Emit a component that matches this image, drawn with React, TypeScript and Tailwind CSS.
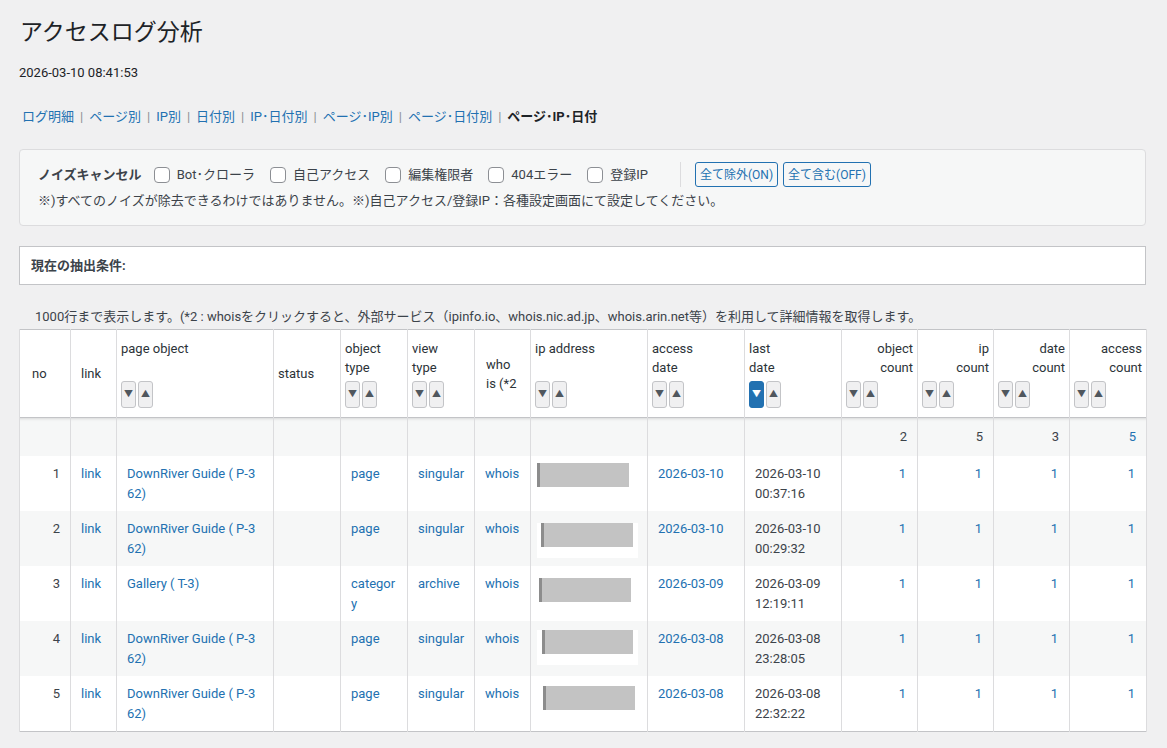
import React from "react";

interface Row {
  no: number;
  page: string;
  objType: string;
  viewType: string;
  access: string;
  lastDate: string;
  lastTime: string;
  ipBox: string;
  ipFrame: boolean;
}

const rows: Row[] = [
  { no: 1, page: "DownRiver Guide ( P-362)", objType: "page", viewType: "singular", access: "2026-03-10", lastDate: "2026-03-10", lastTime: "00:37:16", ipBox: "ml-[0px] mt-0 w-[92px]", ipFrame: false },
  { no: 2, page: "DownRiver Guide ( P-362)", objType: "page", viewType: "singular", access: "2026-03-10", lastDate: "2026-03-10", lastTime: "00:29:32", ipBox: "ml-[4px] mt-[6px] w-[92px]", ipFrame: true },
  { no: 3, page: "Gallery ( T-3)", objType: "category", viewType: "archive", access: "2026-03-09", lastDate: "2026-03-09", lastTime: "12:19:11", ipBox: "ml-[2px] mt-[5px] w-[92px]", ipFrame: false },
  { no: 4, page: "DownRiver Guide ( P-362)", objType: "page", viewType: "singular", access: "2026-03-08", lastDate: "2026-03-08", lastTime: "23:28:05", ipBox: "ml-[5px] mt-[3px] w-[91px]", ipFrame: true },
  { no: 5, page: "DownRiver Guide ( P-362)", objType: "page", viewType: "singular", access: "2026-03-08", lastDate: "2026-03-08", lastTime: "22:32:22", ipBox: "ml-[6px] mt-[3px] w-[92px]", ipFrame: false },
];

const navItems = ["ログ明細", "ページ別", "IP別", "日付別", "IP･日付別", "ページ･IP別", "ページ･日付別"];
const noiseItems = ["Bot･クローラ", "自己アクセス", "編集権限者", "404エラー", "登録IP"];

function SortButtons({ active }: { active?: boolean }) {
  return (
    <div className="flex gap-[2px] mt-[4px]">
      <span
        className={`w-[15px] h-[27px] rounded-[3px] border flex items-center justify-center text-[9px] ${
          active ? "bg-[#2271b1] border-[#2271b1] text-white" : "bg-[#f0f0f1] border-[#c3c4c7] text-[#50575e]"
        }`}
      >
        ▼
      </span>
      <span className="w-[15px] h-[27px] rounded-[3px] border bg-[#f0f0f1] border-[#c3c4c7] text-[#50575e] flex items-center justify-center text-[9px]">
        ▲
      </span>
    </div>
  );
}

function SortTh({ lines, right, active }: { lines: string[]; right?: boolean; active?: boolean }) {
  return (
    <th className="align-top font-normal px-[4px] pt-[9px] pb-[9px] border-x border-[#dcdcde]">
      <div className={`min-h-[38px] leading-[19px] ${right ? "text-right" : "text-left"}`}>
        {lines.map((l) => (
          <div key={l}>{l}</div>
        ))}
      </div>
      <SortButtons active={active} />
    </th>
  );
}

export default function App() {
  const link = "text-[#2271b1]";
  const td = "align-top pt-[8px] pb-[7px] border-x border-[#dcdcde]";

  return (
    <div className="min-h-screen bg-[#f0f0f1] text-[#3c434a] text-[13px] font-['Roboto','Noto_Sans_CJK_JP',sans-serif] pl-[19px] pr-[21px] pt-[18px] pb-[20px]">
      <h1 className="text-[23px] leading-[29px] text-[#1d2327] pl-[1px]">アクセスログ分析</h1>
      <div className="mt-[17px] text-[13px] leading-[18px] text-[#1d2327]">2026-03-10 08:41:53</div>

      {/* view switch */}
      <div className="mt-[25px] leading-[20px] pl-[3px] flex items-center">
        {navItems.map((n) => (
          <React.Fragment key={n}>
            <span className={link}>{n}</span>
            <span className="mx-[6px] text-[#8c8f94]">|</span>
          </React.Fragment>
        ))}
        <span className="font-bold text-[#1d2327]">ページ･IP･日付</span>
      </div>

      {/* noise cancel */}
      <div className="mt-[22px] bg-[#f6f7f7] border border-[#dcdcde] rounded-[4px] pl-[18px] pt-[12px] pb-[14px]">
        <div className="flex items-center h-[25px]">
          <span className="font-bold text-[#3c434a] mr-[12px]">ノイズキャンセル</span>
          {noiseItems.map((n) => (
            <label key={n} className="flex items-center mr-[15px]">
              <span className="w-[16px] h-[16px] rounded-[4px] border border-[#8c8f94] bg-white mr-[7px]" />
              <span>{n}</span>
            </label>
          ))}
          <span className="w-px h-[25px] bg-[#dcdcde] ml-[17px] mr-[14px]" />
          <button className="h-[25px] px-[4px] rounded-[3px] border border-[#2271b1] bg-[#f6f7f7] text-[#2271b1] text-[12px]">
            全て除外(ON)
          </button>
          <button className="ml-[5px] h-[25px] px-[4px] rounded-[3px] border border-[#2271b1] bg-[#f6f7f7] text-[#2271b1] text-[12px]">
            全て含む(OFF)
          </button>
        </div>
        <div className="mt-[4px] leading-[20px]">
          ※)すべてのノイズが除去できるわけではありません。※)自己アクセス/登録IP：各種設定画面にて設定してください。
        </div>
      </div>

      {/* current filter */}
      <div className="mt-[20px] h-[39px] bg-white border border-[#c3c4c7] flex items-center pl-[11px]">
        <span className="font-bold text-[#3c434a]">現在の抽出条件:</span>
      </div>

      <p className="mt-[22px] pl-[16px] leading-[20px]">
        1000行まで表示します。(*2 : whoisをクリックすると、外部サービス（ipinfo.io、whois.nic.ad.jp、whois.arin.net等）を利用して詳細情報を取得します。
      </p>

      <table className="mt-[2px] w-[1127px] table-fixed border-collapse bg-white border border-[#c3c4c7]">
        <colgroup>
          <col className="w-[51px]" />
          <col className="w-[46px]" />
          <col className="w-[157px]" />
          <col className="w-[67px]" />
          <col className="w-[67px]" />
          <col className="w-[67px]" />
          <col className="w-[56px]" />
          <col className="w-[117px]" />
          <col className="w-[97px]" />
          <col className="w-[97px]" />
          <col className="w-[76px]" />
          <col className="w-[76px]" />
          <col className="w-[76px]" />
          <col className="w-[77px]" />
        </colgroup>
        <thead className="text-[#2c3338]">
          <tr className="border-b border-[#c3c4c7]">
            <th className="font-normal text-left pl-[12px] align-middle border-x border-[#dcdcde]">no</th>
            <th className="font-normal text-left pl-[10px] align-middle border-x border-[#dcdcde]">link</th>
            <SortTh lines={["page object"]} />
            <th className="font-normal text-left pl-[4px] align-middle border-x border-[#dcdcde]">status</th>
            <SortTh lines={["object", "type"]} />
            <SortTh lines={["view", "type"]} />
            <th className="font-normal text-left pl-[11px] align-middle leading-[19px] border-x border-[#dcdcde]">
              who
              <br />
              is (*2
            </th>
            <SortTh lines={["ip address"]} />
            <SortTh lines={["access", "date"]} />
            <SortTh lines={["last", "date"]} active />
            <SortTh lines={["object", "count"]} right />
            <SortTh lines={["ip", "count"]} right />
            <SortTh lines={["date", "count"]} right />
            <SortTh lines={["access", "count"]} right />
          </tr>
        </thead>
        <tbody className="leading-[20px]">
          <tr className="bg-[#f6f7f7] h-[38px] shadow-[inset_0_4px_3px_-3px_rgba(0,0,0,0.12)]">
            {Array.from({ length: 10 }).map((_, i) => (
              <td key={i} className="border-x border-[#dcdcde]" />
            ))}
            <td className="text-right pr-[10px] border-x border-[#dcdcde]">2</td>
            <td className="text-right pr-[10px] border-x border-[#dcdcde]">5</td>
            <td className="text-right pr-[10px] border-x border-[#dcdcde]">3</td>
            <td className={`text-right pr-[10px] border-x border-[#dcdcde] ${link}`}>5</td>
          </tr>
          {rows.map((r, i) => (
            <tr key={r.no} className={i % 2 === 1 ? "bg-[#f6f7f7]" : "bg-white"}>
              <td className={`${td} text-right pr-[10px]`}>{r.no}</td>
              <td className={`${td} pl-[10px] ${link}`}>link</td>
              <td className={`${td} pl-[10px] pr-[16px] break-all ${link}`}>{r.page}</td>
              <td className={td} />
              <td className={`${td} pl-[10px] pr-[10px] break-all ${link}`}>{r.objType}</td>
              <td className={`${td} pl-[10px] ${link}`}>{r.viewType}</td>
              <td className={`${td} pl-[10px] ${link}`}>whois</td>
              <td className="align-top pt-[7px] pl-[6px] border-x border-[#dcdcde]">
                <div className={r.ipFrame ? "bg-white w-[101px] h-[35px] -mt-[1px]" : ""}>
                  <div className={`${r.ipBox} h-[24px] bg-[#c3c3c3] border-l-[3px] border-[#8c8c8c]`} />
                </div>
              </td>
              <td className={`${td} pl-[10px] ${link}`}>{r.access}</td>
              <td className={`${td} pl-[10px]`}>
                {r.lastDate}
                <br />
                {r.lastTime}
              </td>
              <td className={`${td} text-right pr-[11px] ${link}`}>1</td>
              <td className={`${td} text-right pr-[11px] ${link}`}>1</td>
              <td className={`${td} text-right pr-[11px] ${link}`}>1</td>
              <td className={`${td} text-right pr-[11px] ${link}`}>1</td>
            </tr>
          ))}
        </tbody>
      </table>
    </div>
  );
}
